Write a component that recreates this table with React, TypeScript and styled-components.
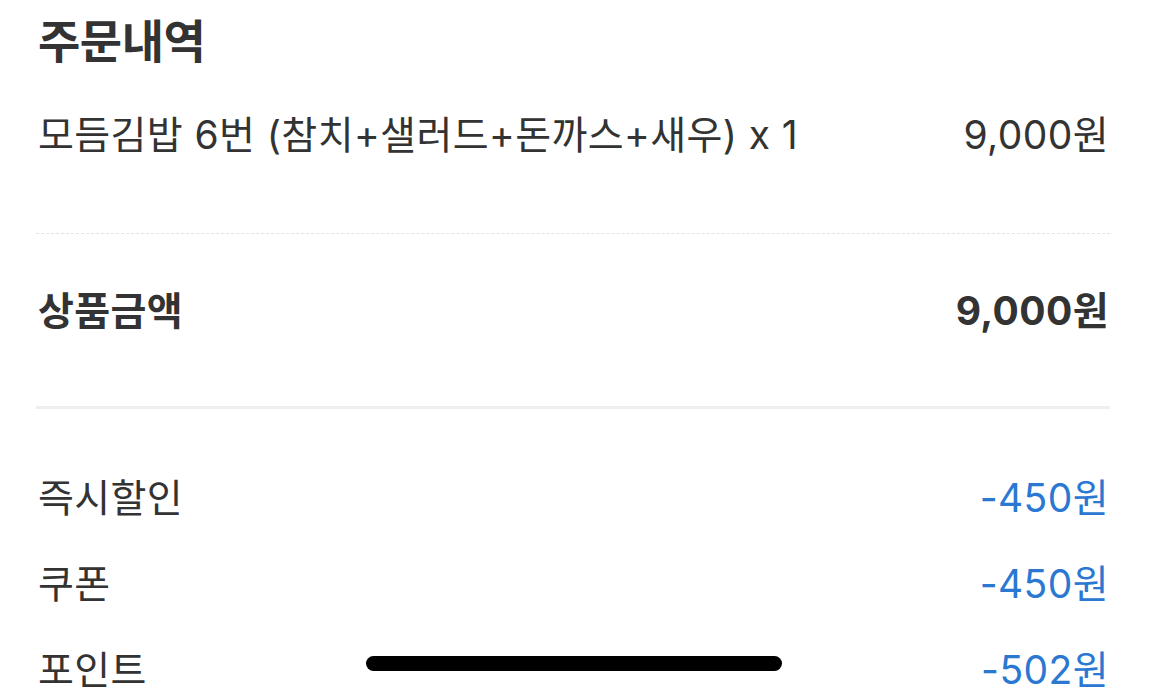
import styled, { createGlobalStyle } from "styled-components";

const GlobalStyle = createGlobalStyle`
  body {
    margin: 0;
    background: #ffffff;
    font-family: Inter, "Noto Sans CJK KR", sans-serif;
    color: #333333;
  }
`;

const Screen = styled.div`
  position: relative;
  width: 1158px;
  height: 695px;
  overflow: hidden;
  padding: 0 48px 0 36px;
  box-sizing: border-box;
`;

const Title = styled.h1`
  margin: 0;
  padding-left: 2px;
  height: 82px;
  line-height: 82px;
  font-size: 46px;
  font-weight: 700;
  letter-spacing: -0.5px;
`;

const Row = styled.div<{ $bold?: boolean; $height?: number }>`
  display: flex;
  justify-content: space-between;
  align-items: center;
  height: ${(p) => p.$height ?? 40}px;
  padding: 0 1px 0 2px;
  font-size: 39px;
  letter-spacing: 0.4px;
  font-weight: ${(p) => (p.$bold ? 700 : 400)};
`;

const Amount = styled.span<{ $discount?: boolean }>`
  color: ${(p) => (p.$discount ? "#2b78d3" : "#333333")};
`;

const Dashed = styled.hr`
  margin: 51px 0 0;
  border: 0;
  border-top: 1px dashed #e3e3e3;
`;

const Divider = styled.hr`
  margin: 0;
  border: 0;
  height: 3px;
  background: #eeeeee;
`;

const SubtotalBlock = styled.div`
  padding: 54px 0 78px;
`;

const DiscountList = styled.div`
  display: flex;
  flex-direction: column;
  gap: 46px;
  padding-top: 66px;
`;

const HomeIndicator = styled.div`
  position: absolute;
  left: 366px;
  top: 656px;
  width: 416px;
  height: 15px;
  border-radius: 8px;
  background: #000000;
`;

const discounts = [
  { label: "즉시할인", amount: "-450원" },
  { label: "쿠폰", amount: "-450원" },
  { label: "포인트", amount: "-502원" },
];

const App = () => {
  return (
    <>
      <GlobalStyle />
      <Screen>
        <Title>주문내역</Title>
        <Row $height={100}>
          <span>모듬김밥 6번 (참치+샐러드+돈까스+새우) x 1</span>
          <Amount>9,000원</Amount>
        </Row>
        <Dashed />
        <SubtotalBlock>
          <Row $bold>
            <span>상품금액</span>
            <Amount>9,000원</Amount>
          </Row>
        </SubtotalBlock>
        <Divider />
        <DiscountList>
          {discounts.map((d) => (
            <Row key={d.label}>
              <span>{d.label}</span>
              <Amount $discount>{d.amount}</Amount>
            </Row>
          ))}
        </DiscountList>
        <HomeIndicator />
      </Screen>
    </>
  );
};

export default App;
